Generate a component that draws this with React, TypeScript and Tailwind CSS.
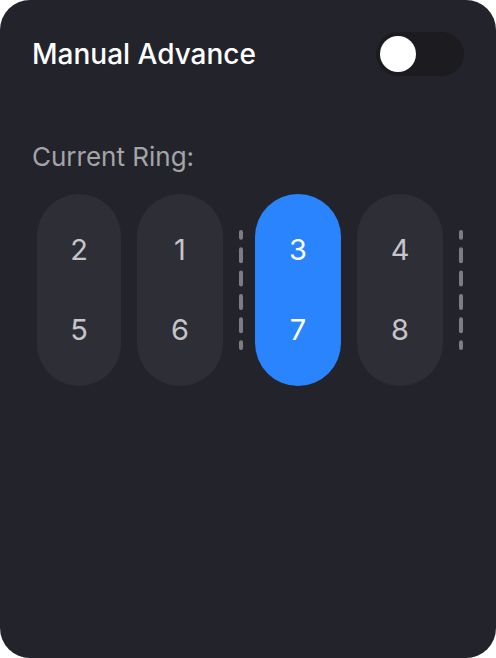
const rings = [
  { top: 2, bottom: 5, width: "w-[84px]" },
  { top: 1, bottom: 6, width: "w-[86px]" },
];

function Pill({
  top,
  bottom,
  active = false,
  width = "w-[86px]",
}: {
  top: number;
  bottom: number;
  active?: boolean;
  width?: string;
}) {
  return (
    <div
      className={`flex h-[192px] ${width} shrink-0 flex-col items-center justify-center gap-[44px] rounded-full text-[29px] leading-[36px] ${
        active ? "bg-[#2a84fe] text-white" : "bg-[#2e2e36] text-[#c5c5ca]"
      }`}
    >
      <span>{top}</span>
      <span>{bottom}</span>
    </div>
  );
}

function Divider() {
  const dashes = [
    [0, 9.7],
    [17.3, 16],
    [40.6, 16],
    [63.9, 16],
    [87.2, 16],
    [110.3, 9.7],
  ];
  return (
    <svg width="4" height="120" viewBox="0 0 4 120" className="-mr-1 shrink-0">
      {dashes.map(([y, h]) => (
        <rect key={y} x="0" y={y} width="4" height={h} rx="2" fill="#7c7c82" />
      ))}
    </svg>
  );
}

export default function App() {
  return (
    <div className="min-h-screen bg-white" style={{ fontFamily: "Inter, 'Noto Sans', sans-serif" }}>
      <div className="h-[658px] w-[496px] overflow-hidden rounded-[30px] bg-[#23232b]">
        <div className="flex items-center justify-between pl-8 pr-8 pt-8">
          <h1 className="text-[28px] font-medium leading-[44px] text-white">Manual Advance</h1>
          <button className="flex h-[44px] w-[88px] items-center rounded-full bg-[#1b1b20] p-1">
            <span className="h-9 w-9 rounded-full bg-white" />
          </button>
        </div>

        <p className="mt-[65px] pl-8 text-[26px] leading-[31px] text-[#a4a4a9]">Current Ring:</p>

        <div className="mt-[22px] flex items-center gap-4 pl-[37px]">
          {rings.map((r) => (
            <Pill key={r.top} top={r.top} bottom={r.bottom} width={r.width} />
          ))}
          <Divider />
          <Pill top={3} bottom={7} active />
          <Pill top={4} bottom={8} />
          <Divider />
        </div>
      </div>
    </div>
  );
}
